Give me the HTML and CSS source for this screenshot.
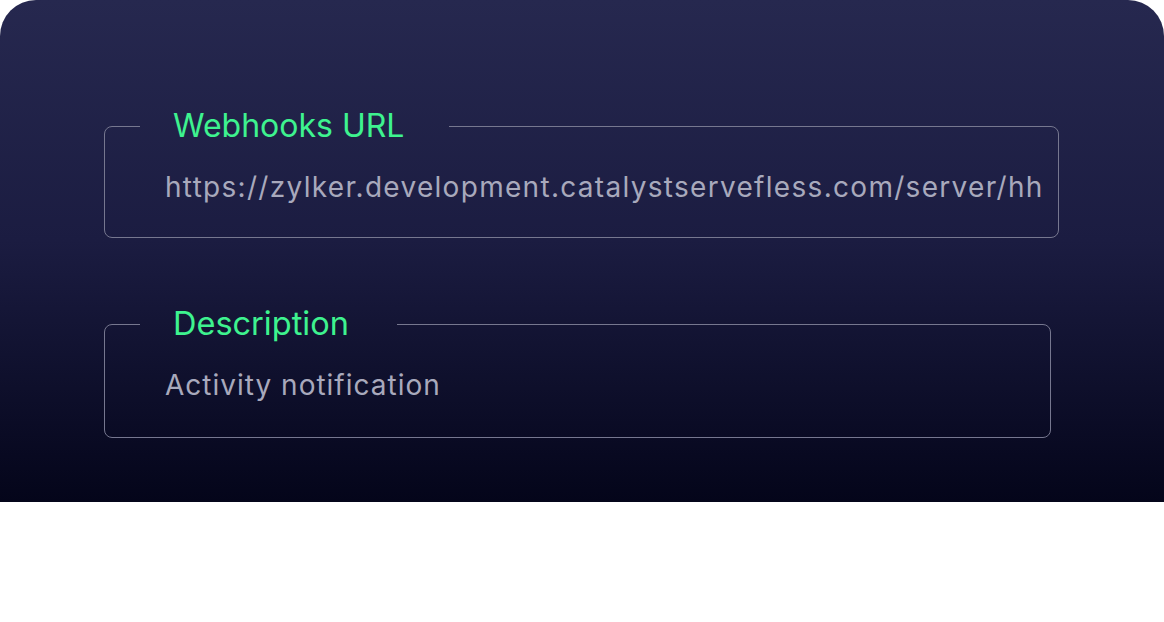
FILE: index.html
```html
<!DOCTYPE html>
<html lang="en">
<head>
<meta charset="utf-8">
<title>Webhook</title>
<link rel="stylesheet" href="styles.css">
</head>
<body>
<div class="panel">
  <fieldset class="field field-url">
    <legend class="label">Webhooks URL</legend>
    <div class="value">https://zylker.development.catalystservefless.com/server/hh</div>
  </fieldset>
  <fieldset class="field field-desc">
    <legend class="label">Description</legend>
    <div class="value">Activity notification</div>
  </fieldset>
</div>
</body>
</html>
```
FILE: styles.css
```css
html, body {
  margin: 0;
  padding: 0;
  background: #ffffff;
}
body {
  font-family: "Inter", "Liberation Sans", sans-serif;
}
.panel {
  width: 1164px;
  height: 502px;
  box-sizing: border-box;
  padding: 106px 0 0 104px;
  border-radius: 36px 36px 0 0;
  background: linear-gradient(180deg, #26284f 0%, #1b1c41 48%, #04051a 100%);
  display: flex;
  flex-direction: column;
  gap: 66px;
}
.field {
  margin: 0;
  padding: 0;
  border: 1px solid #76778f;
  border-radius: 8px;
  box-sizing: border-box;
  min-width: 0;
}
.field-url { width: 955px; }
.field-desc { width: 947px; }
.label {
  margin-left: 35px;
  padding: 0 45px 0 33px;
  font-size: 32px;
  line-height: 40px;
  color: #3ef38f;
  font-weight: 400;
}
.field-desc .label {
  font-size: 32.5px;
  padding-right: 48px;
}
.value {
  font-size: 28px;
  line-height: 40px;
  color: #a8a9bc;
  padding: 21px 0 30px 60px;
  white-space: nowrap;
  letter-spacing: 1.3px;
}
.field-desc .value {
  padding-bottom: 32px;
  letter-spacing: 1px;
}
```
